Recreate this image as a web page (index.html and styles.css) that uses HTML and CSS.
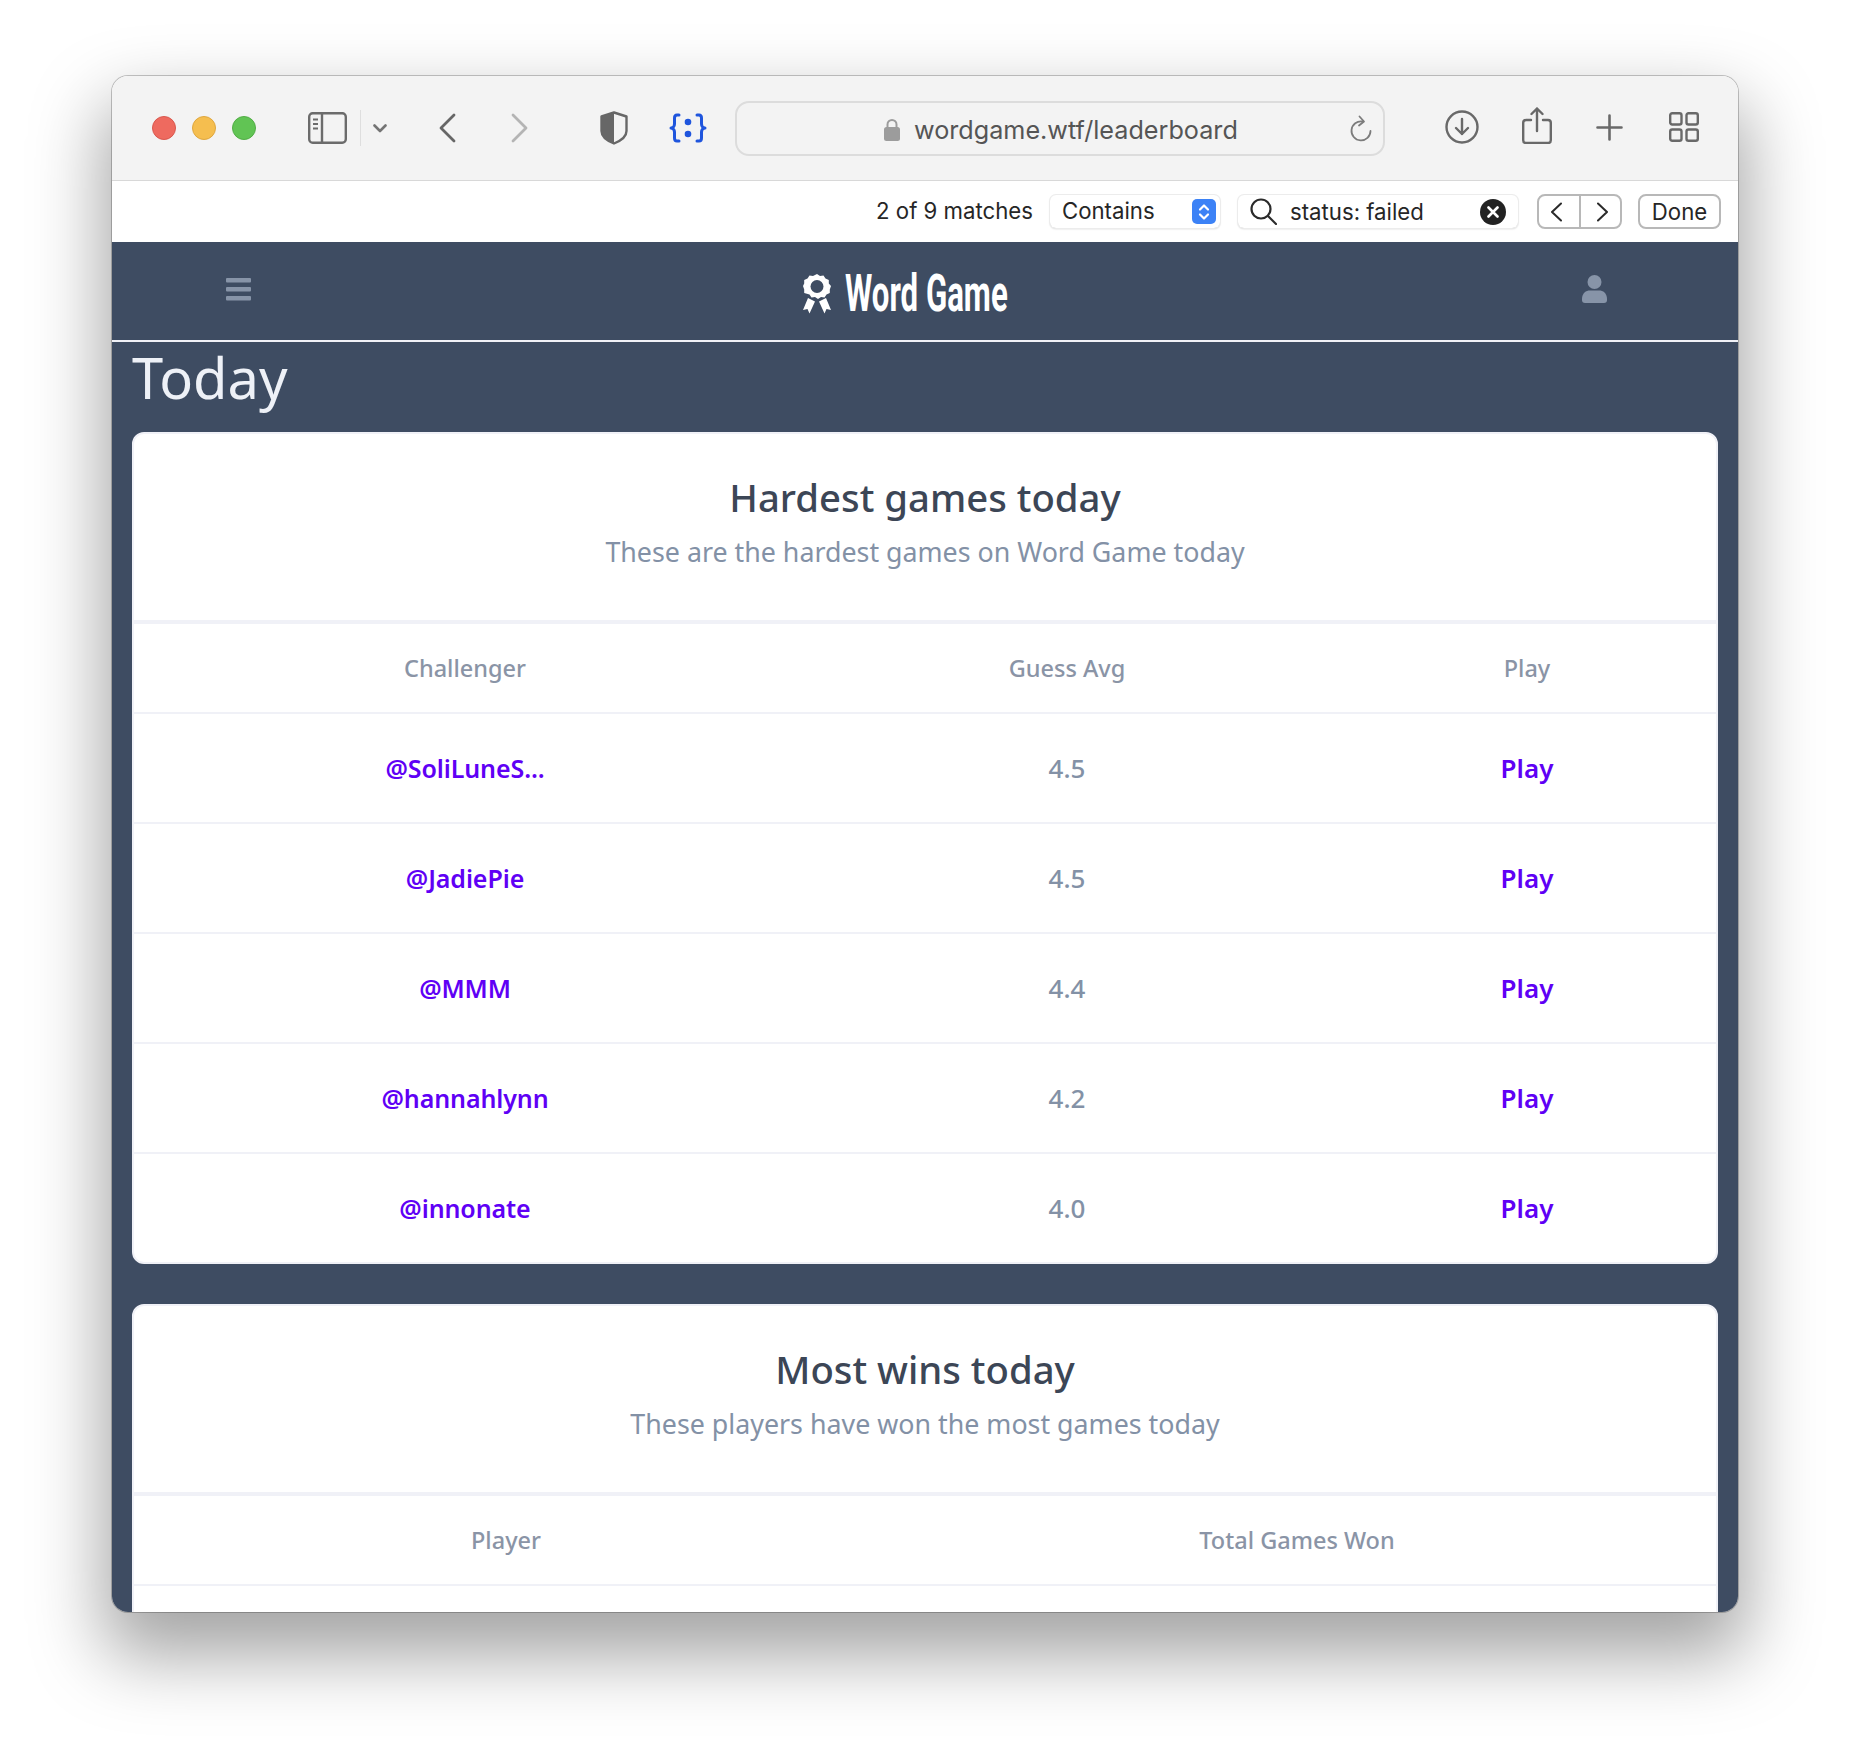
FILE: index.html
```html
<!DOCTYPE html>
<html lang="en">
<head>
    <meta charset="UTF-8">
    <title>Word Game Leaderboard</title>
    <link rel="stylesheet" href="styles.css">
</head>
<body>
    <div class="window">
        <div class="toolbar">
            <span class="light red"></span>
            <span class="light yellow"></span>
            <span class="light green"></span>

            <svg class="ic-sidebar" width="39" height="32" viewBox="0 0 39 32" fill="none" stroke="#6b6b6b" stroke-width="2.4">
                <rect x="1.2" y="1.2" width="36.6" height="29.6" rx="3.5"/>
                <path d="M14 1v30"/>
                <path d="M5 7.5h5M5 12h5M5 16.5h5" stroke-width="1.8"/>
            </svg>
            <span class="tool-divider"></span>
            <svg class="ic-chevron" width="14" height="9" viewBox="0 0 14 9" fill="none" stroke="#747474" stroke-width="2.6" stroke-linecap="round" stroke-linejoin="round">
                <path d="M1.5 1.5L7 7l5.5-5.5"/>
            </svg>
            <svg class="ic-back" width="17" height="30" viewBox="0 0 17 30" fill="none" stroke="#666" stroke-width="2.8" stroke-linecap="round" stroke-linejoin="round">
                <path d="M15 2L2 15l13 13"/>
            </svg>
            <svg class="ic-forward" width="17" height="30" viewBox="0 0 17 30" fill="none" stroke="#b4b4b4" stroke-width="2.8" stroke-linecap="round" stroke-linejoin="round">
                <path d="M2 2l13 13L2 28"/>
            </svg>
            <svg class="ic-shield" width="28" height="34" viewBox="0 0 28 34">
                <path d="M14 1.5L26.5 5.5V20c0 5-5 9.5-12.5 12.5C6.500 29.500 1.500 25 1.500 20V5.500z" fill="none" stroke="#676767" stroke-width="2.4" stroke-linejoin="round"/>
                <path d="M14 1.500L1.500 5.500V20c0 5 5 9.500 12.500 12.500z" fill="#676767"/>
            </svg>
            <svg class="ic-braces" width="38" height="30" viewBox="0 0 38 30" fill="none" stroke="#1f55dd" stroke-width="3" stroke-linecap="round" stroke-linejoin="round">
                <path d="M10 2H8C6 2 5.500 3.500 5.500 5v6C5.500 13 4 15 2 15c2 0 3.500 2 3.500 4v6c0 1.500.5 3 2.500 3h2"/>
                <path d="M28 2h2c2 0 2.500 1.500 2.500 3v6c0 2 1.500 4 3.500 4-2 0-3.500 2-3.500 4v6c0 1.500-.5 3-2.500 3h-2"/>
                <circle cx="19" cy="9" r="3.300" fill="#1f55dd" stroke="none"/>
                <circle cx="19" cy="21" r="3.300" fill="#1f55dd" stroke="none"/>
            </svg>

            <div class="urlbar">
                <svg class="ic-lock" width="16" height="23" viewBox="0 0 16 23">
                    <path d="M3.500 10V6.500a4.500 4.500 0 0 1 9 0V10" fill="none" stroke="#9c9c9c" stroke-width="2"/>
                    <rect x="0" y="9" width="16" height="14" rx="2.500" fill="#9c9c9c"/>
                </svg>
                <span class="url-text">wordgame.wtf/leaderboard</span>
                <svg class="ic-reload" width="22" height="27" viewBox="0 0 22 27" fill="none" stroke="#7c7c7c" stroke-width="1.800" stroke-linecap="round" stroke-linejoin="round">
                    <path d="M12.500 6.500A9.500 9.500 0 1 0 20.500 16"/>
                    <path d="M9.500 1.500l4.500 5-5 4"/>
                </svg>
            </div>

            <svg class="ic-download" width="34" height="34" viewBox="0 0 34 34" fill="none" stroke="#696969" stroke-width="2.400" stroke-linecap="round" stroke-linejoin="round">
                <circle cx="17" cy="17" r="15.500"/>
                <path d="M17 9v15M11 18l6 6 6-6"/>
            </svg>
            <svg class="ic-share" width="30" height="37" viewBox="0 0 30 37" fill="none" stroke="#696969" stroke-width="2.400" stroke-linecap="round" stroke-linejoin="round">
                <path d="M9 13H4c-1.800 0-2.800 1-2.800 2.800v17.400C1.200 35 2.200 36 4 36h22c1.800 0 2.800-1 2.800-2.800V15.800C28.800 14 27.800 13 26 13h-5"/>
                <path d="M15 24V1.500M9.500 7L15 1.500 20.500 7"/>
            </svg>
            <svg class="ic-plus" width="27" height="27" viewBox="0 0 27 27" fill="none" stroke="#696969" stroke-width="2.600" stroke-linecap="round">
                <path d="M13.500 1.500v24M1.500 13.500h24"/>
            </svg>
            <svg class="ic-grid" width="30" height="30" viewBox="0 0 30 30" fill="none" stroke="#696969" stroke-width="2.400">
                <rect x="1.200" y="1.200" width="11.300" height="11.300" rx="2"/>
                <rect x="17.500" y="1.200" width="11.300" height="11.300" rx="2"/>
                <rect x="1.200" y="17.500" width="11.300" height="11.300" rx="2"/>
                <rect x="17.500" y="17.500" width="11.300" height="11.300" rx="2"/>
            </svg>
        </div>

        <div class="findbar">
            <span class="match-count">2 of 9 matches</span>
            <div class="find-select">
                <span class="select-label">Contains</span>
                <span class="stepper">
                    <svg width="12" height="18" viewBox="0 0 12 18" fill="none" stroke="#fff" stroke-width="2.200" stroke-linecap="round" stroke-linejoin="round">
                        <path d="M2 6.500L6 2.500l4 4M2 11.500l4 4 4-4"/>
                    </svg>
                </span>
            </div>
            <div class="find-input">
                <svg width="27" height="27" viewBox="0 0 27 27" fill="none" stroke="#2b2b2b" stroke-width="2.200" stroke-linecap="round">
                    <circle cx="11" cy="11" r="9.500"/>
                    <path d="M18 18l8 8"/>
                </svg>
                <span class="find-text">status: failed</span>
                <span class="find-clear">
                    <svg width="12" height="12" viewBox="0 0 12 12" stroke="#fff" stroke-width="2.600" stroke-linecap="round">
                        <path d="M1.500 1.500l9 9M10.500 1.500l-9 9"/>
                    </svg>
                </span>
            </div>
            <div class="find-arrows">
                <span class="arrow-btn first">
                    <svg width="12" height="20" viewBox="0 0 12 20" fill="none" stroke="#2b2b2b" stroke-width="2" stroke-linecap="round" stroke-linejoin="round"><path d="M11 1.500L2 10l9 8.500"/></svg>
                </span>
                <span class="arrow-btn second">
                    <svg width="12" height="20" viewBox="0 0 12 20" fill="none" stroke="#2b2b2b" stroke-width="2" stroke-linecap="round" stroke-linejoin="round"><path d="M1 1.500L10 10l-9 8.500"/></svg>
                </span>
            </div>
            <div class="done-btn">Done</div>
        </div>

        <div class="page">
            <header class="site-header">
                <svg class="ic-menu" width="25" height="23" viewBox="0 0 25 23" fill="#8794a8">
                    <rect width="25" height="4.500" rx="1"/>
                    <rect y="9" width="25" height="4.500" rx="1"/>
                    <rect y="18" width="25" height="4.500" rx="1"/>
                </svg>
                <div class="logo">
                    <svg width="28" height="40" viewBox="0 0 28 40">
                        <path d="M5 24l7 3.500-5.500 12-2-4.500-4.500 1zM23 24l-7 3.500 5.500 12 2-4.500 4.500 1z" fill="#fff"/>
                        <path d="M14 0l3 2 3.500-.5 2 3 3.300 1.500v3.500L28 12l-1.200 3.500v3.500l-3.300 1.500-2 3-3.500-.5-3 2-3-2-3.500.5-2-3L1.200 19v-3.500L0 12l1.200-2.500V6L4.500 4.500l2-3L10 2z" fill="#fff"/>
                        <circle cx="14" cy="12.500" r="6.500" fill="#3e4c62"/>
                    </svg>
                    <span class="logo-text">Word Game</span>
                </div>
                <svg class="ic-user" width="25" height="28" viewBox="0 0 25 28" fill="#8794a8">
                    <circle cx="12.500" cy="7" r="7"/>
                    <path d="M0 24c0-6 4-8.500 8-8.500h9c4 0 8 2.500 8 8.500v1c0 2-1 3-3 3H3c-2 0-3-1-3-3z"/>
                </svg>
            </header>

            <main class="content">
                <h1>Today</h1>

                <section class="card">
                    <div class="card-head">
                        <h2>Hardest games today</h2>
                        <p>These are the hardest games on Word Game today</p>
                    </div>
                    <table>
                        <colgroup><col class="c1"><col class="c2"><col class="c3"></colgroup>
                        <thead>
                            <tr><th>Challenger</th><th>Guess Avg</th><th>Play</th></tr>
                        </thead>
                        <tbody>
                            <tr><td><a class="player" href="#">@SoliLuneS...</a></td><td>4.5</td><td><a href="#">Play</a></td></tr>
                            <tr><td><a class="player" href="#">@JadiePie</a></td><td>4.5</td><td><a href="#">Play</a></td></tr>
                            <tr><td><a class="player" href="#">@MMM</a></td><td>4.4</td><td><a href="#">Play</a></td></tr>
                            <tr><td><a class="player" href="#">@hannahlynn</a></td><td>4.2</td><td><a href="#">Play</a></td></tr>
                            <tr><td><a class="player" href="#">@innonate</a></td><td>4.0</td><td><a href="#">Play</a></td></tr>
                        </tbody>
                    </table>
                </section>

                <section class="card">
                    <div class="card-head">
                        <h2>Most wins today</h2>
                        <p>These players have won the most games today</p>
                    </div>
                    <table>
                        <colgroup><col class="w1"><col class="w2"></colgroup>
                        <thead>
                            <tr><th>Player</th><th>Total Games Won</th></tr>
                        </thead>
                        <tbody>
                            <tr><td></td><td></td></tr>
                        </tbody>
                    </table>
                </section>
            </main>
        </div>
    </div>
</body>
</html>
```

FILE: styles.css
```css
html, body {
    margin: 0;
    height: 1760px;
    background-color: #fff;
    overflow: hidden;
}

body {
    padding: 76px 112px 0;
    box-sizing: border-box;
    font-family: "Inter", "Liberation Sans", sans-serif;
}

.window {
    width: 1626px;
    height: 1536px;
    border-radius: 16px;
    overflow: hidden;
    background-color: #fff;
    box-shadow: 0 0 0 1px rgba(0, 0, 0, 0.22), 0 36px 72px 8px rgba(0, 0, 0, 0.36);
    display: flex;
    flex-direction: column;
}

/* safari toolbar */
.toolbar {
    flex: none;
    height: 105px;
    box-sizing: border-box;
    padding-left: 40px;
    display: flex;
    align-items: center;
    background-color: #f3f3f3;
    border-bottom: 1px solid #d8d8d8;
}

.light {
    width: 24px;
    height: 24px;
    border-radius: 50%;
    margin-right: 16px;
    box-sizing: border-box;
}

.red { background-color: #ee6a5f; border: 1px solid #d9584e; }
.yellow { background-color: #f5be4f; border: 1px solid #dfa73f; }
.green { background-color: #61c454; border: 1px solid #52ad46; margin-right: 0; }

.toolbar svg { flex: none; }
.ic-sidebar { margin-left: 52px; }
.tool-divider { width: 1px; height: 36px; background-color: #dedede; margin-left: 13px; }
.ic-chevron { margin-left: 12px; }
.ic-back { margin-left: 52px; }
.ic-forward { margin-left: 55px; }
.ic-shield { margin-left: 72px; }
.ic-braces { margin-left: 41px; }

.urlbar {
    margin-left: 28px;
    width: 650px;
    height: 55px;
    box-sizing: border-box;
    border: 2px solid #dcdcdc;
    border-radius: 14px;
    display: flex;
    align-items: center;
    padding-left: 147px;
}

.urlbar .ic-lock { margin: 3px 14px 0 0; }

.url-text {
    font-size: 25.2px;
    margin-top: 3px;
    color: #555;
    width: 436px;
    white-space: nowrap;
}

.ic-download { margin: 0 0 2px 60px; }
.ic-share { margin: 0 0 6px 43px; }
.ic-plus { margin: 0 0 2px 44px; }
.ic-grid { margin: 0 0 2px 46px; }

/* find bar */
.findbar {
    flex: none;
    height: 61px;
    box-sizing: border-box;
    padding-right: 17px;
    display: flex;
    align-items: center;
    justify-content: flex-end;
    background-color: #fff;
    font-size: 22.2px;
    color: #262626;
}

.match-count { margin: 0 17px 2px 0; white-space: nowrap; }
.select-label { padding-bottom: 2px; }

.find-select {
    width: 170px;
    height: 33px;
    box-sizing: border-box;
    padding: 0 4px 0 12px;
    border-radius: 6px;
    box-shadow: 0 0 0 1px #ececec, 0 1px 2px rgba(0, 0, 0, 0.2);
    display: flex;
    align-items: center;
    justify-content: space-between;
    margin-right: 18px;
}

.stepper {
    width: 24px;
    height: 25px;
    border-radius: 5px;
    background-color: #3c82f6;
    display: flex;
    align-items: center;
    justify-content: center;
}

.find-input {
    width: 280px;
    height: 33px;
    box-sizing: border-box;
    padding: 0 12px;
    border-radius: 6px;
    box-shadow: 0 0 0 1px #ececec, 0 1px 2px rgba(0, 0, 0, 0.2);
    display: flex;
    align-items: center;
    margin-right: 19px;
}

.find-text { margin-left: 13px; flex: 1; white-space: nowrap; }

.find-clear {
    width: 26px;
    height: 26px;
    border-radius: 50%;
    background-color: #222;
    display: flex;
    align-items: center;
    justify-content: center;
}

.find-arrows {
    width: 85px;
    height: 35px;
    box-sizing: border-box;
    border: 2px solid #b8b8b8;
    border-radius: 8px;
    display: flex;
    margin-right: 16px;
}

.arrow-btn {
    display: flex;
    align-items: center;
    justify-content: center;
}

.arrow-btn.first { width: 40px; padding-right: 6px; box-sizing: border-box; }
.arrow-btn.second { flex: 1; padding-left: 4px; border-left: 2px solid #b8b8b8; }

.done-btn {
    width: 83px;
    height: 35px;
    box-sizing: border-box;
    border: 2px solid #b8b8b8;
    border-radius: 8px;
    display: flex;
    align-items: center;
    justify-content: center;
}

/* page */
.page {
    flex: 1;
    background-color: #3e4c62;
    overflow: hidden;
    font-family: "Noto Sans", "Open Sans", sans-serif;
}

.site-header {
    height: 98px;
    border-bottom: 2px solid #f0f1f7;
    display: flex;
    align-items: center;
    justify-content: space-between;
    padding: 0 131px 0 114px;
}

.ic-menu { margin-top: -4px; }
.ic-user { margin-top: -4px; }

.logo {
    display: flex;
    align-items: center;
    margin: 5px 23px 0 0;
}

.logo-text {
    display: inline-block;
    width: 162px;
    margin-left: 14px;
    font-family: "Roboto", sans-serif;
    font-weight: 700;
    font-size: 52px;
    line-height: 60px;
    color: #fff;
    white-space: nowrap;
    transform: scaleX(0.6);
    transform-origin: left center;
}

.content {
    padding: 0 20px;
}

h1 {
    margin: 0;
    height: 90px;
    font-size: 56px;
    line-height: 70px;
    font-weight: 400;
    color: #eef1f7;
}

.card {
    background-color: #fff;
    border: 2px solid #f0f1f7;
    border-radius: 12px;
    overflow: hidden;
    margin-bottom: 40px;
}

.card-head {
    height: 190px;
    box-sizing: border-box;
    padding-top: 37px;
    text-align: center;
    border-bottom: 4px solid #f0f1f7;
}

h2 {
    margin: 0;
    font-size: 38.3px;
    line-height: 52px;
    font-weight: 500;
    color: #3c4656;
}

.card-head p {
    margin: 9px 0 0;
    font-size: 26.8px;
    line-height: 40px;
    color: #8391a6;
}

table {
    width: 100%;
    table-layout: fixed;
    border-collapse: separate;
    border-spacing: 0;
}

.c1 { width: 662px; }
.c2 { width: 542px; }
.c3 { width: 378px; }
.w1 { width: 744px; }
.w2 { width: 838px; }

th {
    height: 88px;
    padding: 0;
    font-size: 23.5px;
    font-weight: 500;
    color: #8a94a6;
    border-bottom: 2px solid #f0f1f7;
}

td {
    height: 108px;
    padding: 0;
    text-align: center;
    font-size: 26px;
    font-weight: 500;
    color: #8391a6;
    border-bottom: 2px solid #f0f1f7;
}

tbody tr:last-child td { border-bottom: none; }

a {
    color: #5f00f5;
    font-weight: 600;
    text-decoration: none;
}

.player {
    font-size: 25px;
    letter-spacing: -0.1px;
}
```
